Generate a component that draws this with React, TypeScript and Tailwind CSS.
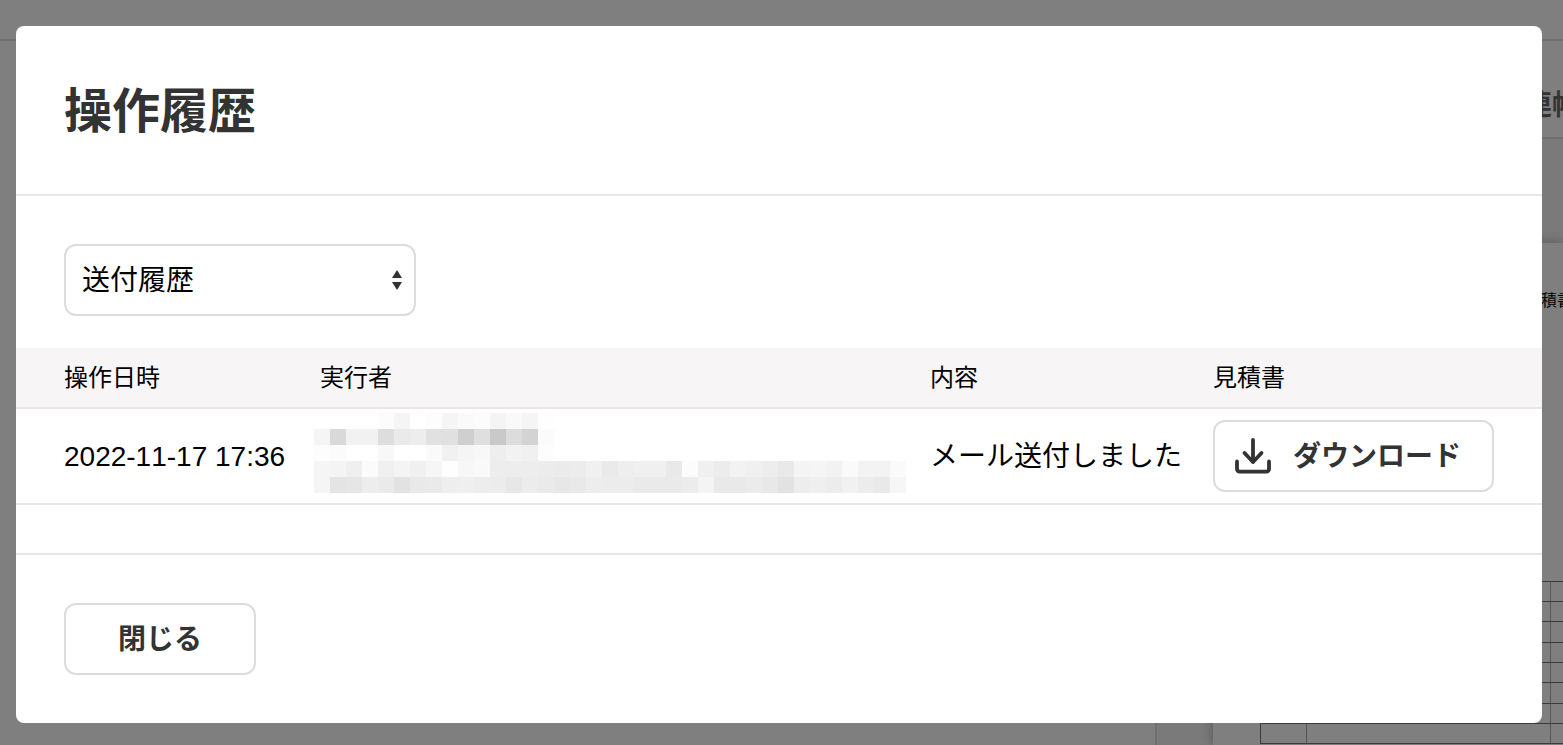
import type { ReactNode } from 'react';

type HistoryRow = {
  executedAt: string;
  content: string;
};

const HISTORY: HistoryRow[] = [
  { executedAt: '2022-11-17 17:36', content: 'メール送付しました' }
];

// Grey levels of the redacted user name, one line per row of blocks
const MASK = [
  'ff ff ff ff fc f5 ff fd f5 fa fc f4 f9 f5 fe ff ff ff ff ff ff ff ff ff ff ff ff ff ff ff ff ff ff ff ff ff ff',
  'f5 d9 f1 f1 dd ea ed e1 e0 cf df c9 dc d3 fb ff ff ff ff ff ff ff ff ff ff ff ff ff ff ff ff ff ff ff ff ff ff',
  'fd fb ff ff f8 ff ff fa f1 f5 f8 ee f2 f0 fd ff ff ff ff ff ff ff ff ff ff ff ff ff ff ff ff ff ff ff ff ff ff',
  'f5 f4 ef fb f0 f4 f0 f6 fe f7 f9 ed ed ed ec eb ec f0 ea ee f0 f0 e9 fc f0 ec f2 f0 ed e9 f4 f5 f2 fa f3 f3 fa',
  'f5 e4 e6 ed ea e2 e9 ea ee ef ed ec e7 ec ea e7 e9 ed ec ec ea ea ea ec f4 e9 e9 eb e8 e2 ed ef ec f1 ec e9 f6'
];

const SHEET_ROWS = [1, 2, 3, 4, 5, 6, 7, 8];

const MaskedName = () => (
  <div className="w-[592px]">
    {MASK.map((line, y) => (
      <div key={y} className="flex">
        {line.split(' ').map((level, x) => (
          <span
            key={x}
            className="size-4"
            style={{ backgroundColor: `#${level}${level}${level}` }}
          />
        ))}
      </div>
    ))}
  </div>
);

const DownloadIcon = () => (
  <svg
    viewBox="0 0 40 40"
    className="size-10"
    fill="none"
    stroke="currentColor"
    strokeWidth="3.8"
    strokeLinecap="round"
    strokeLinejoin="round"
    aria-hidden="true"
  >
    <path d="M20 4v21.5" />
    <path d="M11.5 17l8.5 9 8.5-9" />
    <path d="M4 25.5v7.5a2.6 2.6 0 0 0 2.6 2.6h26.8a2.6 2.6 0 0 0 2.6-2.6v-7.5" />
  </svg>
);

const Button = ({
  className,
  icon,
  children
}: {
  className: string;
  icon?: ReactNode;
  children: ReactNode;
}) => (
  <button
    type="button"
    className={`flex h-[72px] items-center gap-5 rounded-xl border-2 border-[#dcdcdc] bg-white text-[28px] leading-10 font-bold whitespace-nowrap text-[#333] ${className}`}
  >
    {icon}
    <span className="pt-0.5">{children}</span>
  </button>
);

const HistorySelect = () => (
  <div className="relative w-[352px]">
    <select
      aria-label="送付履歴"
      className="h-[72px] w-full appearance-none rounded-xl border-2 border-[#dcdcdc] bg-white px-4 pt-0.5 text-[28px] text-black"
    >
      <option>送付履歴</option>
    </select>
    <svg
      viewBox="0 0 10 20"
      className="pointer-events-none absolute top-[26px] right-3.5 h-5 w-2.5"
      fill="#333"
      aria-hidden="true"
    >
      <path d="M5 0l5 8H0zM5 20l5-8H0z" />
    </svg>
  </div>
);

const HistoryTable = () => (
  <table className="w-full table-fixed text-left whitespace-nowrap text-black">
    <thead className="border-b-2 border-[#e7e5e6] bg-[#f7f5f6] text-2xl">
      <tr className="h-[60px]">
        <th className="w-[288px] pr-4 pl-12 font-normal">操作日時</th>
        <th className="px-4 font-normal">実行者</th>
        <th className="w-[283px] px-4 font-normal">内容</th>
        <th className="w-[345px] pr-12 pl-4 font-normal">見積書</th>
      </tr>
    </thead>
    <tbody className="text-[28px] leading-10">
      {HISTORY.map((row) => (
        <tr key={row.executedAt} className="border-b-2 border-[#e7e5e6]">
          <td className="pt-0.5 pl-12 [font-kerning:none]">{row.executedAt}</td>
          <td className="pt-1 pr-2 pl-2.5 align-top">
            <MaskedName />
          </td>
          <td className="px-4 pt-0.5">{row.content}</td>
          <td className="py-[11px] pr-12 pl-4">
            <Button className="w-full pl-[18px]" icon={<DownloadIcon />}>
              ダウンロード
            </Button>
          </td>
        </tr>
      ))}
    </tbody>
  </table>
);

// The estimate screen that stays visible around the dialog
const EstimatePage = () => (
  <div
    className="absolute inset-0 flex flex-col overflow-hidden bg-white"
    aria-hidden="true"
  >
    <div className="h-[41px] shrink-0 border-b-2 border-[#e0e0e0]" />
    <div className="flex flex-1 justify-end">
      <div className="flex w-[408px] flex-col border-l-2 border-[#e0e0e0]">
        <div className="h-[98px] shrink-0 overflow-hidden border-b-2 border-[#e0e0e0] pt-[45px] pl-[367px] text-[28px] leading-10 font-bold whitespace-nowrap text-[#666]">
          連帳
        </div>
        <div className="flex-1 overflow-hidden bg-[#f5f5f5] pt-[104px] pl-14">
          <div className="h-full bg-white pl-[47px] shadow-[0_0_12px_rgba(0,0,0,0.3)]">
            <div className="pt-11 pl-[281px] text-base leading-7 whitespace-nowrap">
              積書
            </div>
            <div className="mt-[266px] border-t border-l border-[#777]">
              {SHEET_ROWS.map((row) => (
                <div
                  key={row}
                  className="flex h-5 border-b border-[#777] nth-[3n]:h-[21px]"
                >
                  <div className="w-[46px] border-r border-[#aaa]" />
                  <div className="w-[244px] border-r border-[#aaa]" />
                </div>
              ))}
            </div>
          </div>
        </div>
      </div>
    </div>
  </div>
);

export default function App() {
  return (
    <div className="relative min-h-screen overflow-hidden pt-[26px] pr-[21px] pl-4 font-['Liberation_Sans','Noto_Sans_CJK_JP',sans-serif]">
      <EstimatePage />
      <div className="absolute inset-0 bg-black/50" />
      <div
        role="dialog"
        aria-labelledby="history-title"
        className="relative overflow-hidden rounded-lg bg-white"
      >
        <header className="border-b-2 border-[#e7e7e7] px-12 pt-[50px] pb-[46px]">
          <h1
            id="history-title"
            className="text-5xl leading-[72px] font-bold text-[#333]"
          >
            操作履歴
          </h1>
        </header>
        <div className="border-b-2 border-[#e7e7e7] pb-12">
          <div className="px-12 pt-12 pb-8">
            <HistorySelect />
          </div>
          <HistoryTable />
        </div>
        <footer className="p-12">
          <Button className="w-48 justify-center">閉じる</Button>
        </footer>
      </div>
    </div>
  );
}
